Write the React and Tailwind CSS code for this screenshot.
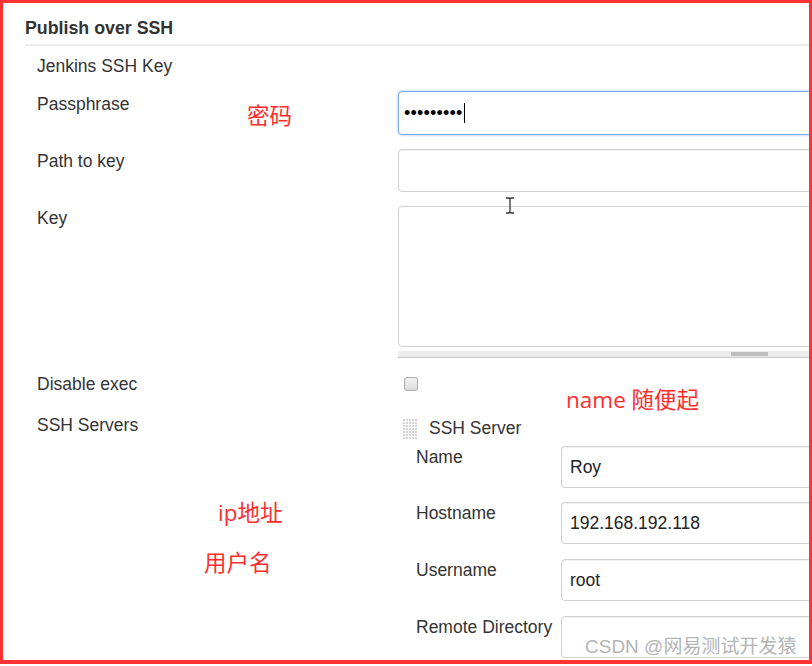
import React from 'react';

const font = { fontFamily: '"Liberation Sans", Arial, sans-serif' };
const noteFont = { fontFamily: '"Open Sans", "Noto Sans CJK SC", sans-serif' };

const Label = ({ children, className = '' }) => (
  <div className={`w-[395px] shrink-0 pl-[34px] text-[17.5px] leading-[20px] text-[#333] ${className}`}>{children}</div>
);

const Input = ({ value, h = 'h-[42px]' }) => (
  <div className={`${h} w-full flex items-center pl-[8px] border border-[#cfcfcf] rounded-[4px] bg-white text-[17.5px] text-[#222] shadow-[inset_0_1px_1px_rgba(0,0,0,0.06)]`}>
    {value}
  </div>
);

const SubRow = ({ label, value, className = '' }) => (
  <div className={`flex items-start ${className}`}>
    <div className="w-[163px] shrink-0 pl-[18px] pt-[1px] text-[17.5px] leading-[20px] text-[#333] whitespace-nowrap">{label}</div>
    <div className="flex-1">
      <Input value={value} />
    </div>
  </div>
);

const Grip = () => (
  <svg width="15" height="22" viewBox="0 0 15 22">
    {Array.from({ length: 7 }).map((_, r) =>
      Array.from({ length: 5 }).map((_, c) => (
        <rect key={`${r}-${c}`} x={c * 3} y={r * 3 + 1} width="2" height="2" fill="#d4d4d4" />
      ))
    )}
  </svg>
);

const Note = ({ children, className }) => (
  <div className={`absolute leading-none text-[#ff2d2d] whitespace-nowrap ${className}`} style={noteFont}>
    {children}
  </div>
);

export default function App() {
  return (
    <div className="relative w-[812px] h-[666px] bg-white" style={font}>
      <div className="w-[812px] h-[664px] border-[3px] border-b-4 border-[#ff3333] overflow-hidden bg-white">
        <div className="ml-[22px] pt-[15px] pb-[6px] border-b-2 border-[#ebebeb] text-[17.8px] leading-[20px] font-bold text-[#333]">
          Publish over SSH
        </div>

        <div className="mt-[10px] flex">
          <Label>Jenkins SSH Key</Label>
        </div>

        <div className="mt-[15px] flex items-start">
          <Label className="pt-[3px]">Passphrase</Label>
          <div className="flex-1 mr-[-20px]">
            <div className="h-[44px] flex items-center pl-[5px] border border-[#7ea8ee] rounded-[4px] shadow-[0_0_3px_rgba(90,150,240,0.6)] bg-white">
              <span className="text-[18px] leading-none tracking-[0.2px] text-black">•••••••••</span>
              <span className="ml-[1px] w-[1px] h-[20px] bg-black" />
            </div>
          </div>
        </div>

        <div className="mt-[14px] flex items-start">
          <Label className="pt-[2px]">Path to key</Label>
          <div className="flex-1 mr-[-20px]">
            <Input h="h-[43px]" />
          </div>
        </div>

        <div className="mt-[14px] flex items-start">
          <Label className="pt-[2px]">Key</Label>
          <div className="flex-1 mr-[-20px]">
            <div className="h-[141px] border border-[#cfcfcf] rounded-[4px] bg-white" />
            <div className="mt-[4px] h-[7px] flex bg-[#ececec] border-b border-[#c6c6c6]">
              <div className="ml-[333px] mt-[1px] w-[37px] h-[4px] bg-[#bdbdbd]" />
            </div>
          </div>
        </div>

        <div className="mt-[16px] flex items-start">
          <Label>Disable exec</Label>
          <div className="mt-[3px] ml-[6px] w-[14px] h-[14px] rounded-[3px] border border-[#a9a9a9] bg-[linear-gradient(#f2f2f2,#dcdcdc)]" />
        </div>

        <div className="mt-[21px] flex items-start">
          <Label>SSH Servers</Label>
          <div className="flex-1 mr-[-20px]">
            <div className="flex items-start">
              <div className="ml-[5px] mt-[3px]"><Grip /></div>
              <div className="ml-[11px] mt-[3px] text-[17.5px] leading-[20px] text-[#333]">SSH Server</div>
            </div>
            <SubRow className="mt-[6px]" label="Name" value="Roy" />
            <SubRow className="mt-[14px]" label="Hostname" value="192.168.192.118" />
            <SubRow className="mt-[15px]" label="Username" value="root" />
            <SubRow className="mt-[15px]" label="Remote Directory" value="" />
          </div>
        </div>
      </div>

      <Note className="left-[247px] top-[105px] text-[22.5px]">密码</Note>
      <Note className="left-[566px] top-[389px] text-[22.5px]">name 随便起</Note>
      <Note className="left-[218px] top-[502px] text-[22.5px]">ip地址</Note>
      <Note className="left-[204px] top-[552px] text-[22.5px]">用户名</Note>

      <svg className="absolute left-[505px] top-[197px]" width="10" height="17" viewBox="0 0 10 17">
        <path d="M1 1h3l1 1 1-1h3M5 2v13M1 16h3l1-1 1 1h3" stroke="#333" strokeWidth="1.3" fill="none" />
      </svg>

      <div
        className="absolute left-[585px] top-[637px] text-[19px] leading-none text-[#b4b4b4] whitespace-nowrap"
        style={{ fontFamily: '"Liberation Sans", Arial, "Noto Sans CJK SC", sans-serif' }}
      >
        CSDN @网易测试开发猿
      </div>
    </div>
  );
}
